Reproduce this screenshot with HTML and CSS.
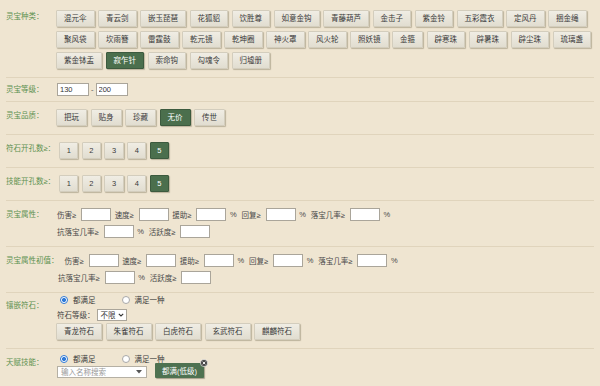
FILE: index.html
```html
<!DOCTYPE html>
<html lang="zh-CN">
<head>
<meta charset="utf-8">
<title>灵宝搜索</title>
<link rel="stylesheet" href="styles.css">
</head>
<body>
<div class="page">

  <div class="sec">
    <div class="lbl">灵宝种类：</div>
    <div class="opts">
      <button class="btn" type="button">混元伞</button>
      <button class="btn" type="button">青云剑</button>
      <button class="btn" type="button">嵌玉琵琶</button>
      <button class="btn" type="button">花狐貂</button>
      <button class="btn" type="button">饮胜尊</button>
      <button class="btn" type="button">如意金钩</button>
      <button class="btn" type="button">青藤葫芦</button>
      <button class="btn" type="button">金击子</button>
      <button class="btn" type="button">紫金铃</button>
      <button class="btn" type="button">五彩霞衣</button>
      <button class="btn" type="button">定风丹</button>
      <button class="btn" type="button">捆金绳</button>
      <button class="btn" type="button">聚风袋</button>
      <button class="btn" type="button">坎雨簪</button>
      <button class="btn" type="button">雷霆鼓</button>
      <button class="btn" type="button">乾元镜</button>
      <button class="btn" type="button">乾坤圈</button>
      <button class="btn" type="button">神火罩</button>
      <button class="btn" type="button">风火轮</button>
      <button class="btn" type="button">照妖镜</button>
      <button class="btn" type="button">金箍</button>
      <button class="btn" type="button">辟寒珠</button>
      <button class="btn" type="button">辟暑珠</button>
      <button class="btn" type="button">辟尘珠</button>
      <button class="btn" type="button">琉璃盏</button>
      <button class="btn" type="button">紫金钵盂</button>
      <button class="btn btn--on" type="button">寂乍针</button>
      <button class="btn" type="button">索命钩</button>
      <button class="btn" type="button">勾魂令</button>
      <button class="btn" type="button">归墟册</button>
    </div>
  </div>

  <div class="sec sec--range">
    <div class="lbl">灵宝等级：</div>
    <div class="range">
      <input class="num num--range" type="text" value="130">
      <span class="dash">-</span>
      <input class="num num--range" type="text" value="200">
    </div>
  </div>

  <div class="sec">
    <div class="lbl">灵宝品质：</div>
    <div class="opts">
      <button class="btn" type="button">把玩</button>
      <button class="btn" type="button">贴身</button>
      <button class="btn" type="button">珍藏</button>
      <button class="btn btn--on" type="button">无价</button>
      <button class="btn" type="button">传世</button>
    </div>
  </div>

  <div class="sec">
    <div class="lbl">符石开孔数≥：</div>
    <div class="opts">
      <button class="btn btn--num" type="button">1</button>
      <button class="btn btn--num" type="button">2</button>
      <button class="btn btn--num" type="button">3</button>
      <button class="btn btn--num" type="button">4</button>
      <button class="btn btn--num btn--on" type="button">5</button>
    </div>
  </div>

  <div class="sec">
    <div class="lbl">技能开孔数≥：</div>
    <div class="opts">
      <button class="btn btn--num" type="button">1</button>
      <button class="btn btn--num" type="button">2</button>
      <button class="btn btn--num" type="button">3</button>
      <button class="btn btn--num" type="button">4</button>
      <button class="btn btn--num btn--on" type="button">5</button>
    </div>
  </div>

  <div class="sec">
    <div class="lbl">灵宝属性：</div>
    <div class="attrs">
      <div class="aline">
        <span class="an">伤害≥</span><input class="num" type="text">
        <span class="an">速度≥</span><input class="num" type="text">
        <span class="an">援助≥</span><input class="num" type="text"><span class="pct">%</span>
        <span class="an">回复≥</span><input class="num" type="text"><span class="pct">%</span>
        <span class="an">落宝几率≥</span><input class="num" type="text"><span class="pct">%</span>
      </div>
      <div class="aline">
        <span class="an">抗落宝几率≥</span><input class="num" type="text"><span class="pct">%</span>
        <span class="an">活跃度≥</span><input class="num" type="text">
      </div>
    </div>
  </div>

  <div class="sec">
    <div class="lbl">灵宝属性初值：</div>
    <div class="attrs attrs--wide">
      <div class="aline">
        <span class="an">伤害≥</span><input class="num" type="text">
        <span class="an">速度≥</span><input class="num" type="text">
        <span class="an">援助≥</span><input class="num" type="text"><span class="pct">%</span>
        <span class="an">回复≥</span><input class="num" type="text"><span class="pct">%</span>
        <span class="an">落宝几率≥</span><input class="num" type="text"><span class="pct">%</span>
      </div>
      <div class="aline">
        <span class="an">抗落宝几率≥</span><input class="num" type="text"><span class="pct">%</span>
        <span class="an">活跃度≥</span><input class="num" type="text">
      </div>
    </div>
  </div>

  <div class="sec sec--stone">
    <div class="lbl lbl--low">镶嵌符石：</div>
    <div class="stack">
      <div class="radios">
        <label class="radio"><input type="radio" name="stone" checked>都满足</label>
        <label class="radio"><input type="radio" name="stone">满足一种</label>
      </div>
      <div class="level">
        <span>符石等级：</span>
        <span class="select">不限<svg class="chev" viewBox="0 0 6 4" width="6" height="4"><path d="M0.8 0.8 L3 3 L5.2 0.8" fill="none" stroke="#333" stroke-width="1.1"/></svg></span>
      </div>
      <div class="opts">
        <button class="btn" type="button">青龙符石</button>
        <button class="btn" type="button">朱雀符石</button>
        <button class="btn" type="button">白虎符石</button>
        <button class="btn" type="button">玄武符石</button>
        <button class="btn" type="button">麒麟符石</button>
      </div>
    </div>
  </div>

  <div class="sec sec--skill">
    <div class="lbl">天赋技能：</div>
    <div class="stack">
      <div class="radios">
        <label class="radio"><input type="radio" name="skill" checked>都满足</label>
        <label class="radio"><input type="radio" name="skill">满足一种</label>
      </div>
      <div class="search-row">
        <div class="search">
          <input class="search-input" type="text" placeholder="输入名称搜索">
          <svg class="caret" viewBox="0 0 6 4" width="6" height="4"><path d="M0 0 H6 L3 3.5 Z" fill="#555"/></svg>
        </div>
        <span class="tag">都满(低级)<svg class="tag-close" viewBox="0 0 8 8" width="8" height="8"><circle cx="4" cy="4" r="3.6" fill="#4a4a4a" stroke="#fff" stroke-width="0.6"/><path d="M2.7 2.7 L5.3 5.3 M5.3 2.7 L2.7 5.3" stroke="#fff" stroke-width="0.9"/></svg></span>
      </div>
    </div>
  </div>

</div>
</body>
</html>
```

FILE: styles.css
```css
* { box-sizing: border-box; }

html, body {
  margin: 0;
  padding: 0;
  overflow: hidden;
}

body {
  background: #efe5d1;
  color: #444;
  font-family: "Liberation Sans", "Noto Sans CJK SC", sans-serif;
  font-size: 7.5px;
}

.page {
  width: 600px;
  height: 386px;
  padding: 3px 6px 0;
}

.sec {
  display: flex;
  align-items: flex-start;
  padding: 5px 0 6px;
  border-bottom: 1px solid #e0d4bc;
}
.sec:last-child { border-bottom: none; }
.sec--range { padding-bottom: 5px; }
.sec--stone { padding-top: 2px; }

.lbl {
  flex: none;
  min-width: 46px;
  margin: 2px 4px 0 0;
  line-height: 13px;
  color: #5d9150;
  white-space: nowrap;
}
.lbl--low { margin-top: 4px; }
.sec--range .lbl { margin-top: 0; }

.opts {
  flex: 1;
  min-width: 0;
  display: flex;
  flex-wrap: wrap;
  column-gap: 3.5px;
}

.btn {
  height: 17px;
  margin: 2px 0;
  padding: 0 7px;
  border: 1px solid #d3cdbd;
  border-radius: 1px;
  background: linear-gradient(#f0ede4, #e1ddd0);
  box-shadow: 1px 1px 1px rgba(95, 85, 60, 0.35);
  font: inherit;
  line-height: 15px;
  color: #3a3a3a;
  white-space: nowrap;
  cursor: pointer;
}
.btn--num { padding: 0 6.5px; }
.btn--on {
  background: #4b6f4d;
  border-color: #3c5a3e;
  color: #fff;
}

/* level range */
.range {
  display: flex;
  align-items: center;
  height: 13px;
  padding-left: 1px;
}
.dash { margin: 0 2px; color: #555; }

.num {
  width: 30px;
  height: 13px;
  margin: 0;
  padding: 0 2px;
  border: 1px solid #aaa59a;
  background: #fff;
  font: inherit;
  color: #333;
  outline: none;
}
.num--range { width: 32px; }

/* attribute lines */
.attrs { flex: 1; padding-left: 1px; }
.aline {
  display: flex;
  align-items: center;
  height: 17px;
  white-space: nowrap;
}
.attrs--wide .aline:first-child { padding-left: 1px; }
.attrs--wide .aline + .aline { margin-left: -5.5px; }
.an { margin-right: 5px; color: #4a4a4a; }
.aline .num { margin-right: 3.5px; }
.pct { margin-right: 5px; color: #4a4a4a; }

/* radio groups */
.stack { flex: 1; display: flex; flex-direction: column; }
.radios {
  display: flex;
  align-items: center;
  height: 9px;
  padding-left: 4px;
}
.radio {
  display: flex;
  align-items: center;
  color: #3c3c3c;
  white-space: nowrap;
}
.radio + .radio { margin-left: 26px; }
.radio input {
  appearance: none;
  -webkit-appearance: none;
  width: 8px;
  height: 8px;
  margin: 0 5px 0 0;
  border: 1px solid #a8a8a8;
  border-radius: 50%;
  background: #fff;
}
.radio input:checked {
  border-color: #2f7ad8;
  background: radial-gradient(circle, #2f7ad8 0 1.8px, #fff 2.3px);
}

.level {
  display: flex;
  align-items: center;
  height: 13px;
  margin-top: 4px;
  padding-left: 1px;
  color: #444;
}
.select {
  display: flex;
  align-items: center;
  justify-content: space-between;
  width: 30px;
  height: 12px;
  margin-left: 2px;
  padding: 0 2px 0 3px;
  border: 1px solid #aaa59a;
  background: #fff;
  color: #333;
}
.chev { display: block; }

/* skills search */
.search-row {
  display: flex;
  align-items: flex-end;
  padding-left: 1px;
}
.search {
  display: flex;
  align-items: center;
  width: 90px;
  height: 12px;
  border: 1px solid #b5b0a4;
  background: #fff;
  padding: 0 4px 0 3px;
}
.search-input {
  flex: 1;
  min-width: 0;
  height: 100%;
  padding: 0;
  border: 0;
  background: transparent;
  font: inherit;
  color: #333;
  outline: none;
}
.search-input::placeholder { color: #999; }
.caret { display: block; flex: none; }

.tag {
  position: relative;
  display: inline-flex;
  align-items: center;
  height: 15px;
  margin-left: 8px;
  padding: 0 7px;
  background: #4e7251;
  color: #fff;
  border-radius: 1px;
  box-shadow: 1px 1px 1px rgba(60, 60, 40, 0.4);
  white-space: nowrap;
}
.tag-close {
  position: absolute;
  top: -4px;
  right: -4px;
}
```
